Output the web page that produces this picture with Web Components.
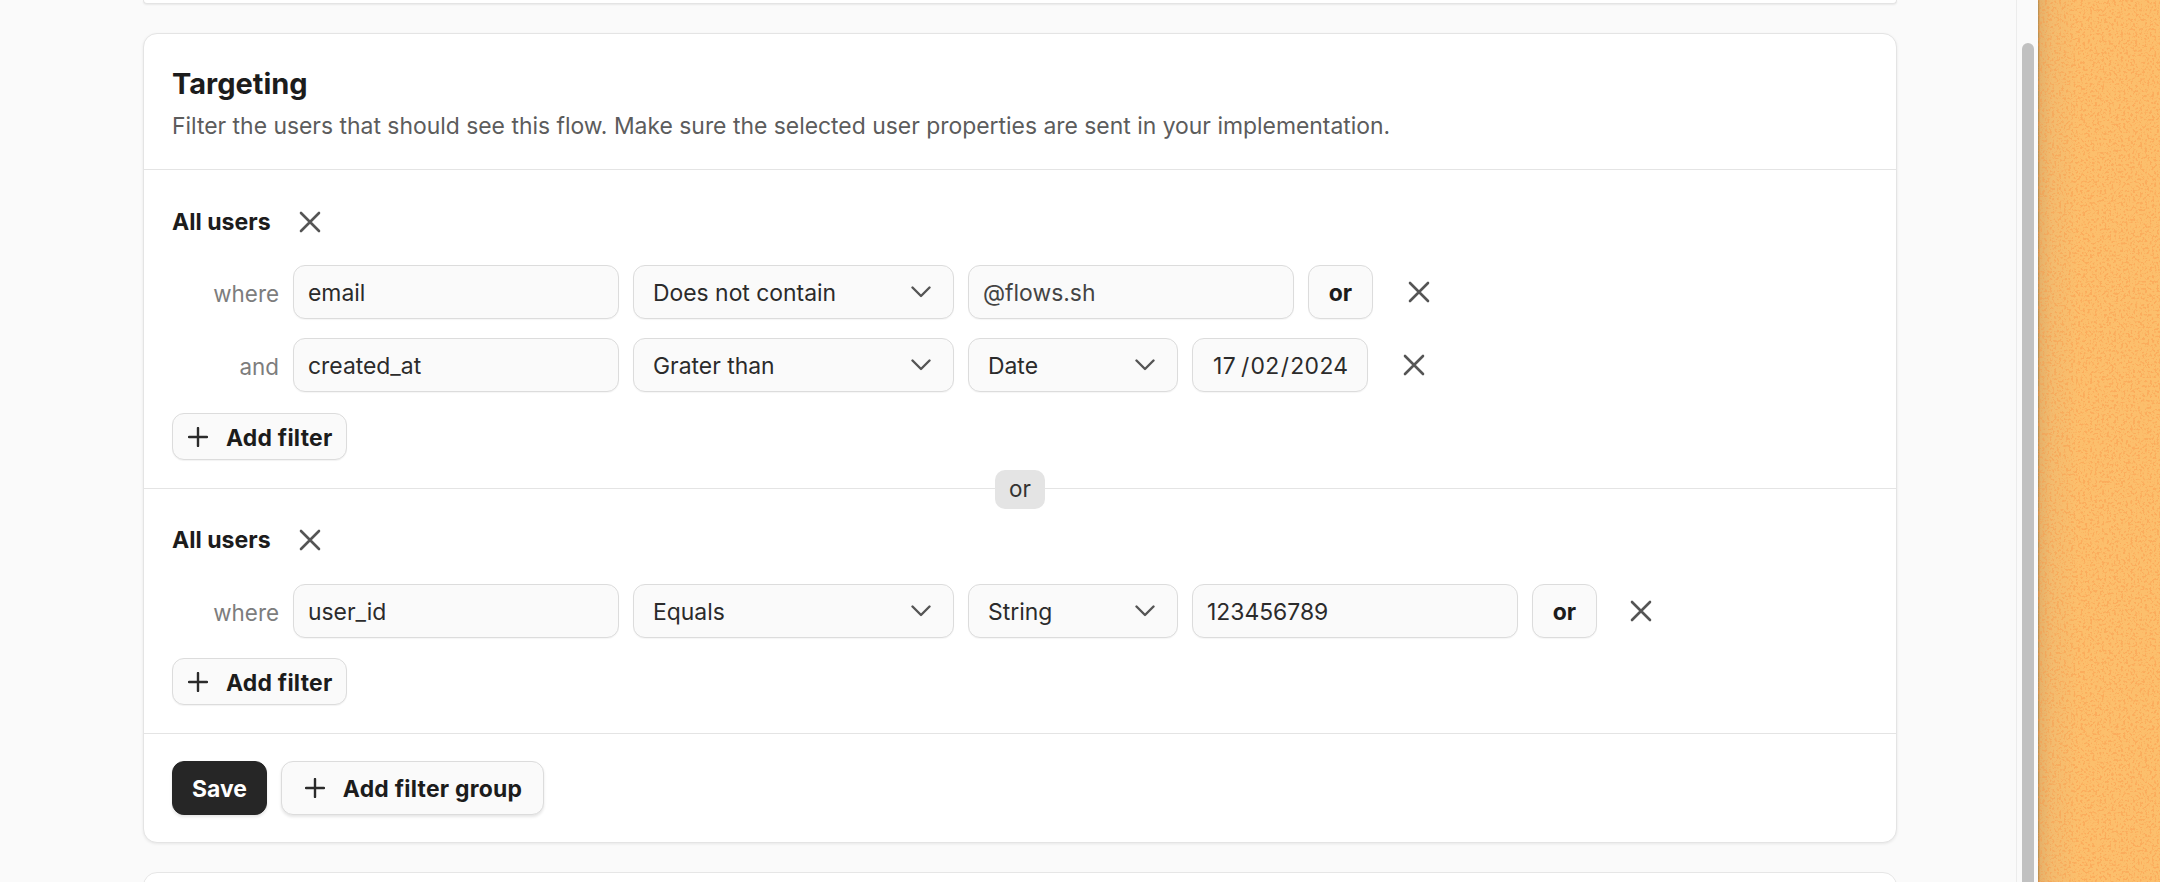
<!DOCTYPE html>
<html>
<head>
<meta charset="utf-8">
<style>
html, body { margin: 0; height: 100%; overflow: hidden; }
body { font-family: Inter, "Liberation Sans", sans-serif; }
</style>
</head>
<body>
<app-window>
  <targeting-card>
    <filter-group label="All users">
      <filter-row prefix="where">
        <text-field w="326">email</text-field>
        <select-field w="321">Does not contain</select-field>
        <text-field w="326" muted>@flows.sh</text-field>
        <or-button></or-button>
        <remove-button gap="35"></remove-button>
      </filter-row>
      <filter-row prefix="and">
        <text-field w="326">created_at</text-field>
        <select-field w="321">Grater than</select-field>
        <select-field w="210">Date</select-field>
        <date-field></date-field>
        <remove-button gap="35"></remove-button>
      </filter-row>
      <flow-button icon small>Add filter</flow-button>
    </filter-group>
    <or-divider></or-divider>
    <filter-group label="All users" second>
      <filter-row prefix="where">
        <text-field w="326">user_id</text-field>
        <select-field w="321">Equals</select-field>
        <select-field w="210">String</select-field>
        <text-field w="326">123456789</text-field>
        <or-button></or-button>
        <remove-button gap="33"></remove-button>
      </filter-row>
      <flow-button icon small>Add filter</flow-button>
    </filter-group>
  </targeting-card>
</app-window>

<script>
const closeIcon = `<svg width="22" height="22" viewBox="0 0 22 22" fill="none" stroke="#555" stroke-width="2.6" stroke-linecap="round"><path d="M2 2 20 20M20 2 2 20"/></svg>`;
const plusIcon = `<svg width="20" height="20" viewBox="0 0 20 20" fill="none" stroke="#2b2b2b" stroke-width="2.4" stroke-linecap="round"><path d="M10 1v18M1 10h18"/></svg>`;
const chevronIcon = `<svg width="20" height="12" viewBox="0 0 20 12" fill="none" stroke="#555" stroke-width="2.4" stroke-linecap="round" stroke-linejoin="round"><path d="M1.5 1.5 10 10l8.5-8.5"/></svg>`;

class AppWindow extends HTMLElement {
    constructor(){
        super();
        this.attachShadow({mode: "open"});
        this.shadowRoot.innerHTML = `
<style>
:host{ display: flex; width: 2160px; height: 882px; overflow: hidden; background: #fafafa; }
.main{ width: 2017px; flex: none; box-sizing: border-box; padding: 0 119px 0 143px; border-right: 1px solid #ececec; overflow: hidden; }
.prev{ height: 3px; background: #fff; border: 1px solid #e4e4e4; border-top: 0; border-radius: 0 0 14px 14px; box-shadow: 0 1px 2px rgba(0,0,0,.07); }
.next{ height: 40px; margin-top: 29px; background: #fff; border: 1px solid #e6e6e6; border-radius: 14px; }
.gutter{ width: 21px; flex: none; box-sizing: border-box; padding: 43px 4px 0 5px; background: #fafafa; }
.thumb{ height: 900px; background: #c1c1c1; border-radius: 6px 6px 0 0; }
.wall{ flex: 1; background: linear-gradient(90deg, #b08648 0, #e6b26a 2px, #f3bb6e 14px, #fcbf6c 40px); }
.wall svg{ display: block; width: 100%; height: 100%; }
</style>
<div class="main">
    <div class="prev"></div>
    <slot></slot>
    <div class="next"></div>
</div>
<div class="gutter"><div class="thumb"></div></div>
<div class="wall">
    <svg>
        <filter id="sand" x="0" y="0" width="100%" height="100%" color-interpolation-filters="sRGB">
            <feTurbulence type="fractalNoise" baseFrequency=".42" numOctaves="2" seed="4"/>
            <feColorMatrix values="0 0 0 0 .98  0 0 0 0 .58  0 0 0 0 .28  7 0 0 0 -3.6"/>
        </filter>
        <rect width="100%" height="100%" filter="url(#sand)" opacity=".42"/>
    </svg>
</div>`;
    }
}

class TargetingCard extends HTMLElement {
    constructor(){
        super();
        this.attachShadow({mode: "open"});
        this.shadowRoot.innerHTML = `
<style>
:host{ display: block; margin-top: 29px; height: 810px; box-sizing: border-box; background: #fff; border: 1px solid #e4e4e4; border-radius: 14px; box-shadow: 0 1px 3px rgba(0,0,0,.08); color: #1f1f1f; }
header{ height: 136px; box-sizing: border-box; padding: 30px 28px 0; border-bottom: 1px solid #e4e4e4; }
h2{ margin: 0; font-size: 29px; line-height: 40px; font-weight: 700; color: #1c1c1c; }
p{ margin: 5px 0 0; font-size: 22.9px; line-height: 34px; color: #5c5c5c; }
footer{ display: flex; gap: 14px; padding: 27px 28px 0; border-top: 1px solid #e4e4e4; }
</style>
<header>
    <h2>Targeting</h2>
    <p>Filter the users that should see this flow. Make sure the selected user properties are sent in your implementation.</p>
</header>
<slot></slot>
<footer>
    <flow-button primary>Save</flow-button>
    <flow-button icon>Add filter group</flow-button>
</footer>`;
    }
}

class FilterGroup extends HTMLElement {
    constructor(){
        super();
        this.attachShadow({mode: "open"});
        this.shadowRoot.innerHTML = `
<style>
:host{ display: flex; flex-direction: column; align-items: flex-start; box-sizing: border-box; height: 318px; padding: 35px 28px 0; }
:host([second]){ height: 244px; padding-top: 34px; }
.title{ display: flex; align-items: center; gap: 28px; height: 34px; margin-bottom: 26px; font-size: 23.1px; font-weight: 700; color: #1c1c1c; }
:host([second]) .title{ margin-bottom: 27px; }
::slotted(filter-row){ margin-bottom: 19px; }
::slotted(flow-button){ margin-top: 2px; }
:host([second]) ::slotted(flow-button){ margin-top: 1px; }
</style>
<div class="title"><span></span>${closeIcon}</div>
<slot></slot>`;
        this.shadowRoot.querySelector("span").textContent = this.getAttribute("label");
    }
}

class FilterRow extends HTMLElement {
    constructor(){
        super();
        this.attachShadow({mode: "open"});
        this.shadowRoot.innerHTML = `
<style>
:host{ display: flex; align-items: center; gap: 14px; height: 54px; }
.prefix{ width: 107px; text-align: right; font-size: 22.4px; color: #7d7d7d; padding-top: 2px; }
</style>
<span class="prefix"></span>
<slot></slot>`;
        this.shadowRoot.querySelector(".prefix").textContent = this.getAttribute("prefix");
    }
}

// shared look of the input-like boxes
const fieldCss = `
:host{ display: flex; align-items: center; flex: none; box-sizing: border-box; height: 54px; padding-top: 2px; background: #fafafa; border: 1px solid #dcdcdc; border-radius: 12px; font-size: 22.9px; color: #2b2b2b; box-shadow: 0 1px 1px rgba(0,0,0,.04); }
`;

class TextField extends HTMLElement {
    constructor(){
        super();
        this.attachShadow({mode: "open"});
        this.shadowRoot.innerHTML = `
<style>${fieldCss}
:host{ padding-left: 14px; padding-right: 14px; }
:host([muted]){ color: #444; }
</style>
<slot></slot>`;
        this.style.width = this.getAttribute("w") + "px";
    }
}

class SelectField extends HTMLElement {
    constructor(){
        super();
        this.attachShadow({mode: "open"});
        this.shadowRoot.innerHTML = `
<style>${fieldCss}
:host{ justify-content: space-between; padding-left: 19px; padding-right: 22px; }
svg{ display: block; margin-bottom: 2px; }
</style>
<span><slot></slot></span>${chevronIcon}`;
        this.style.width = this.getAttribute("w") + "px";
    }
}

class DateField extends HTMLElement {
    constructor(){
        super();
        this.attachShadow({mode: "open"});
        this.shadowRoot.innerHTML = `
<style>${fieldCss}
:host{ width: 176px; padding-left: 20px; letter-spacing: .35px; }
.s{ margin: 0 1px; }
.a{ margin-left: 5px; }
</style>
<span>17</span><span class="s a">/</span><span>02</span><span class="s">/</span><span>2024</span>`;
    }
}

class OrButton extends HTMLElement {
    constructor(){
        super();
        this.attachShadow({mode: "open"});
        this.shadowRoot.innerHTML = `
<style>${fieldCss}
:host{ width: 65px; justify-content: center; font-weight: 700; color: #1c1c1c; }
</style>
or`;
    }
}

class RemoveButton extends HTMLElement {
    constructor(){
        super();
        this.attachShadow({mode: "open"});
        this.shadowRoot.innerHTML = `
<style>
:host{ display: block; flex: none; width: 22px; height: 22px; }
svg{ display: block; }
</style>
${closeIcon}`;
        this.style.marginLeft = (this.getAttribute("gap") - 14) + "px";
    }
}

class FlowButton extends HTMLElement {
    constructor(){
        super();
        this.attachShadow({mode: "open"});
        this.shadowRoot.innerHTML = `
<style>
:host{ display: inline-flex; align-items: center; gap: 18px; box-sizing: border-box; height: 54px; padding: 2px 21px 0 23px; background: #fafafa; border: 1px solid #dcdcdc; border-radius: 12px; font-size: 22.9px; font-weight: 700; letter-spacing: .25px; color: #1c1c1c; box-shadow: 0 2px 3px rgba(0,0,0,.1); }
:host([small]){ height: 47px; padding: 2px 13px 0 15px; box-shadow: 0 1px 1px rgba(0,0,0,.05); }
:host([primary]){ padding: 2px 19px 0; background: #262626; border-color: #262626; color: #fff; letter-spacing: 0; }
svg{ display: block; margin-bottom: 2px; }
</style>
${this.hasAttribute("icon") ? plusIcon : ""}<slot></slot>`;
    }
}

class OrDivider extends HTMLElement {
    constructor(){
        super();
        this.attachShadow({mode: "open"});
        this.shadowRoot.innerHTML = `
<style>
:host{ display: block; height: 1px; background: #e4e4e4; position: relative; }
span{ position: absolute; left: 851px; top: -18px; display: flex; align-items: center; justify-content: center; box-sizing: border-box; padding-bottom: 2px; width: 50px; height: 39px; background: #e4e4e4; border-radius: 10px; font-size: 22.4px; color: #333; }
</style>
<span>or</span>`;
    }
}

customElements.define("app-window", AppWindow);
customElements.define("targeting-card", TargetingCard);
customElements.define("filter-group", FilterGroup);
customElements.define("filter-row", FilterRow);
customElements.define("text-field", TextField);
customElements.define("select-field", SelectField);
customElements.define("date-field", DateField);
customElements.define("or-button", OrButton);
customElements.define("remove-button", RemoveButton);
customElements.define("flow-button", FlowButton);
customElements.define("or-divider", OrDivider);
</script>
</body>
</html>
